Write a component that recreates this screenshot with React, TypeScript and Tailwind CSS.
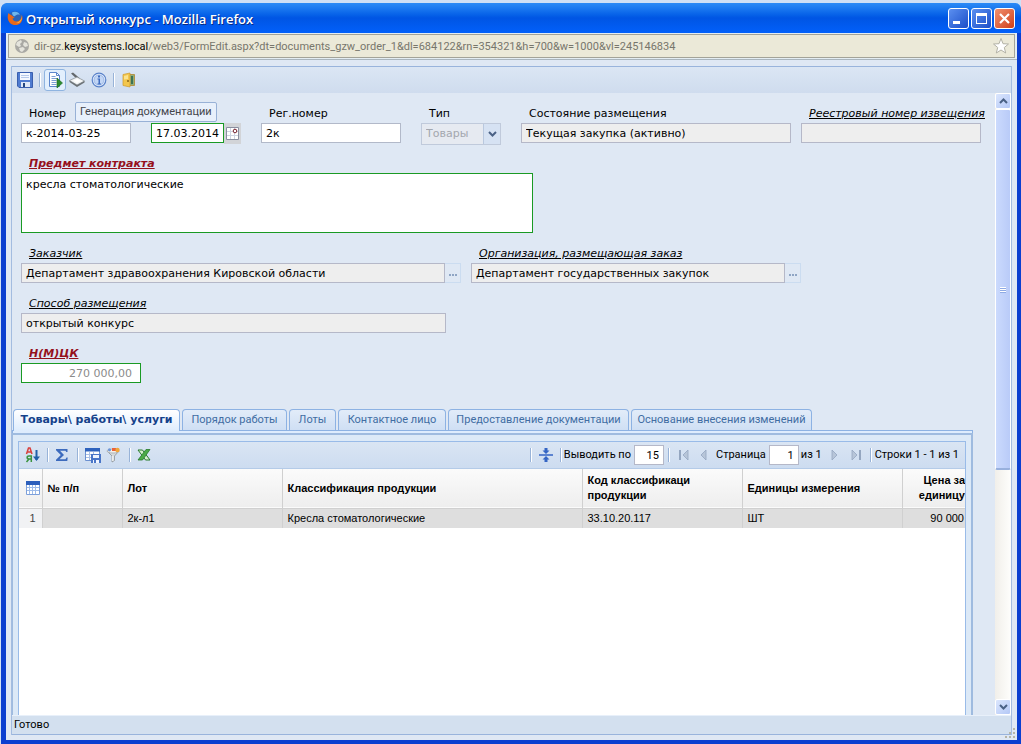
import { useState } from "react";
import type { ReactNode } from "react";

const tahoma = "font-['Roboto',sans-serif]";
const verdana = "font-['DejaVu_Sans',sans-serif]";
const arial = "font-['Liberation_Sans',sans-serif]";

const tabs = [
  { title: "Товары\\ работы\\ услуги", width: "w-[167px]" },
  { title: "Порядок работы", width: "w-[105px]" },
  { title: "Лоты", width: "w-[47px]" },
  { title: "Контактное лицо", width: "w-[108px]" },
  { title: "Предоставление документации", width: "w-[181px]" },
  { title: "Основание внесения изменений", width: "w-[181px]" },
];

const rows = [
  { id: 1, lot: "2к-л1", product: "Кресла стоматологические", code: "33.10.20.117", unit: "ШТ", price: "90 000" },
];

function Separator() {
  return <span className="h-3.5 w-0.5 border-l border-[#98b3d8] bg-white" />;
}

function FirefoxIcon() {
  return (
    <svg width="16" height="16" viewBox="0 0 16 16">
      <circle cx="8" cy="8" r="6.8" fill="#2a63b8" />
      <path d="M5 2.5C8 .8 12 2 13 5c-2-1-4 0-5 1S5 5 5 2.500z" fill="#6db6ee" />
      <path d="M1.500 3C.3 6 .3 10 3 13c3 3 8 2.800 11-.5 1.500-2 2-5 .8-8 0 3-1 5.500-3.300 6.500C9 12 6 11 5.500 8.500l2-.8-2-1.700C4 5 3 4.500 1.500 3z" fill="#e8681a" />
      <path d="M14.800 5c.5 4-2 7.500-6 8 4 1 7-3 6-8z" fill="#fbc043" />
    </svg>
  );
}

function GlobeIcon() {
  return (
    <svg width="16" height="16" viewBox="0 0 16 16">
      <circle cx="8" cy="8" r="7" fill="#a9a9a4" />
      <path d="M3 4l4-2 1 2-2 2 1 2-2 1-3-2zM10 4l3 1 1 3-3 1-2-2zM5 10l4-1 2 2-3 3-2-1z" fill="#e4e4dc" />
    </svg>
  );
}

function StarIcon() {
  return (
    <svg width="18" height="18" viewBox="0 0 18 18">
      <path d="M9 1.500l2 5.200 5.500.3-4.200 3.500 1.400 5.500L9 13l-4.700 3 1.400-5.500L1.500 7 7 6.700z" fill="#fff" stroke="#b3b2a6" />
    </svg>
  );
}

function SaveIcon() {
  return (
    <svg width="16" height="16" viewBox="0 0 16 16">
      <path d="M1 .5h14.500v15H2L.5 14V.5z" fill="#4f7bd0" stroke="#3a5fae" />
      <path d="M3 1h10v7H3z" fill="#f4f8ff" />
      <path d="M4 3.500h8M4 5.500h8" stroke="#b6c9ea" />
      <path d="M4 10h9v5H4z" fill="#dfe8f7" />
      <path d="M6 11h2v4H6z" fill="#24467f" />
    </svg>
  );
}

function GenerateIcon() {
  return (
    <svg width="16" height="16" viewBox="0 0 16 16">
      <path d="M2.500.5h7l3 3v11h-10z" fill="#fff" stroke="#5c86cc" />
      <path d="M9.500.5v3h3" fill="none" stroke="#5c86cc" />
      <path d="M4.500 4.500h4M4.500 6.500h6M4.500 8.500h5M4.500 10.500h5M4.500 12.500h5" stroke="#7c9fd6" />
      <path d="M10 6l5.500 5-5.500 5z" fill="#2c8a30" stroke="#176a1d" strokeWidth=".6" />
    </svg>
  );
}

function ScannerIcon() {
  return (
    <svg width="16" height="16" viewBox="0 0 16 16">
      <path d="M2 1.500l2-1 7 6-2 1.500z" fill="#62676b" />
      <path d="M.5 8.500L8 5l7.500 4-7.500 4z" fill="#f1f3f4" stroke="#82898e" strokeWidth=".7" />
      <path d="M.5 8.500V10L8 15v-2zM15.500 9v1.500L8 15v-2z" fill="#6c7276" />
      <path d="M4 8.800L8.500 7l3.500 2-4 2z" fill="#fff" />
    </svg>
  );
}

function InfoIcon() {
  return (
    <svg width="16" height="16" viewBox="0 0 16 16">
      <circle cx="8" cy="8" r="6.800" fill="#e3edfb" stroke="#5a82c9" strokeWidth="1.200" />
      <circle cx="8" cy="8" r="5" fill="#c2d6f5" stroke="#7c9fda" strokeWidth=".6" />
      <path d="M7 3.500h2v2H7zM6.500 6.500H9v5h1v1H6.500v-1h1v-4h-1z" fill="#3f6cc0" />
    </svg>
  );
}

function ExitIcon() {
  return (
    <svg width="16" height="16" viewBox="0 0 16 16">
      <path d="M7 2.500h6.500v11H7z" fill="#8fae78" stroke="#b49448" />
      <path d="M10 4h2v8h-2z" fill="#3d7356" />
      <path d="M2 2.500L9 1v14L2 13.500z" fill="#f3c64c" stroke="#cf9a2b" strokeWidth=".7" />
      <path d="M3 4l4-1v4L3 7.500z" fill="#fbe28c" />
      <circle cx="7" cy="9" r="1" fill="#8b6414" />
    </svg>
  );
}

function CalendarIcon() {
  return (
    <svg width="13" height="13" viewBox="0 0 13 13">
      <path d="M.5.500h12v12H.5z" fill="#fff" stroke="#8a8fa0" />
      <path d="M1 4.500h11M1 8.500h11M4.500 1v11M8.500 1v11" stroke="#cfd5e2" />
      <circle cx="9" cy="4" r="1.800" fill="#fff" stroke="#7a2430" />
    </svg>
  );
}

function SortIcon() {
  return (
    <svg width="16" height="16" viewBox="0 0 16 16">
      <path d="M1.500 7L3.500 1h1.500L7 7M2.500 5h3.500" fill="none" stroke="#d8403c" strokeWidth="1.500" />
      <path d="M6.300 15V9H4C1.500 9 1.500 12 4 12h2.300M4 12l-2.500 3" fill="none" stroke="#3c9440" strokeWidth="1.500" />
      <path d="M11.500 3v10" stroke="#1f5fa8" strokeWidth="2" />
      <path d="M8 9.500h7L11.500 14z" fill="#1f5fa8" />
    </svg>
  );
}

function SigmaIcon() {
  return (
    <svg width="14" height="14" viewBox="0 0 14 14">
      <path d="M1 1h11.500v3h-1.200L10.500 2.800H5L9 7l-4.500 4.300h6L11.500 9.500h1.200L12.300 13H1v-1.300L5.800 7 1 2.200z" fill="#3d6bbd" />
    </svg>
  );
}

function TableSaveIcon() {
  return (
    <svg width="16" height="16" viewBox="0 0 16 16">
      <path d="M.5 1.500h14v12H.5z" fill="#fff" stroke="#6b90d0" />
      <path d="M0 1h15v3.500H0z" fill="#2e62bd" />
      <path d="M1 7.500h13M1 10.500h13M4.500 5v8M8.500 5v8" stroke="#a9c0e6" />
      <path d="M6 7h10v9H6z" fill="#4a76c8" />
      <path d="M8 8h6v3H8zM8 13h6v3H8z" fill="#f0f5ff" />
      <path d="M9 13h2v3H9z" fill="#4a76c8" />
    </svg>
  );
}

function FilterIcon() {
  return (
    <svg width="16" height="16" viewBox="0 0 16 16">
      <path d="M2 4h12L9.500 9v4.500L7 15V9z" fill="#d5d9dc" stroke="#8b9297" strokeWidth=".8" />
      <path d="M7.800 9V14" stroke="#fff" />
      <ellipse cx="8" cy="4" rx="6" ry="2" fill="#f2f0ea" stroke="#9ba1a6" strokeWidth=".7" />
      <path d="M7 1h4v3H7z" fill="#e9633b" />
      <circle cx="12.500" cy="3" r="2.200" fill="#f0a63a" />
      <circle cx="4.500" cy="2.800" r="1.600" fill="#6d96d8" />
    </svg>
  );
}

function ExcelIcon() {
  return (
    <svg width="14" height="14" viewBox="0 0 14 14">
      <path d="M1 2h4.500L13 12H8.500z" fill="#d6efce" stroke="#267a2b" />
      <path d="M9 1.500h4L5.500 12H1z" fill="#4cab47" stroke="#267a2b" strokeWidth=".8" />
    </svg>
  );
}

function CollapseIcon() {
  return (
    <svg width="16" height="16" viewBox="0 0 16 16">
      <path d="M1 8h14" stroke="#3465c4" strokeWidth="1.500" />
      <path d="M6.500 1h3v2.500h2L8 7 4.500 3.500h2zM6.500 15h3v-2.500h2L8 9l-3.500 3.500h2z" fill="#3465c4" />
    </svg>
  );
}

function GridIcon() {
  return (
    <svg width="14" height="14" viewBox="0 0 14 14">
      <path d="M.5.500h13v13H.5z" fill="#fff" stroke="#7c9fda" />
      <path d="M0 0h14v4H0z" fill="#2c5fbb" />
      <path d="M1 6.500h12M1 9.500h12M3.500 4v9M6.500 4v9M9.500 4v9" stroke="#9dbbe9" />
    </svg>
  );
}

function PagerIcon({ path, bar }: { path: string; bar?: string }) {
  return (
    <svg width="12" height="12" viewBox="0 0 12 12">
      <path d={path} fill="#b7c5d8" stroke="#94a6c0" strokeWidth=".8" />
      {bar && <path d={bar} stroke="#94a6c0" strokeWidth="2" />}
    </svg>
  );
}

function MoreDots() {
  return (
    <svg width="8" height="2" viewBox="0 0 8 2">
      <path d="M0 0h2v2H0zM3 0h2v2H3zM6 0h2v2H6z" fill="#8fa5c4" />
    </svg>
  );
}

function Chevron({ up }: { up?: boolean }) {
  return (
    <svg width="9" height="6" viewBox="0 0 9 6">
      <path d={up ? "M1 5l3.500-3.500L8 5" : "M1 1l3.500 3.500L8 1"} fill="none" stroke="#4a6185" strokeWidth="2" />
    </svg>
  );
}

function Field({ id, label, className, labelClass, children }: {
  id: string;
  label: string;
  className?: string;
  labelClass?: string;
  children: ReactNode;
}) {
  return (
    <div className={`flex shrink-0 flex-col ${className ?? ""}`}>
      <label htmlFor={id} className={`h-5 pt-px pl-2 leading-5 whitespace-nowrap ${labelClass ?? ""}`}>
        {label}
      </label>
      <div className="flex">{children}</div>
    </div>
  );
}

const link = "italic underline";
const required = "italic underline font-bold text-[#95101c]";
const input = "h-5 w-full min-w-0 border border-[#b2b9c9] bg-white px-1 outline-none";
const readOnly = "h-5 w-full min-w-0 border border-[#b5b8c8] bg-[#eeeeee] px-1 pt-px outline-none";
const green = "w-full min-w-0 border border-[#1a9a24] bg-white px-1 outline-none";
const more = "flex h-5 w-4 shrink-0 items-center justify-center border border-l-0 border-[#cbdcf0] pt-1";

function TitleBar() {
  return (
    <header className="flex h-[30px] items-center rounded-t-md bg-linear-to-b from-[#2b8bf6] via-[#0055e4] to-[#0260fa] pr-1.5 pl-1.5">
      <FirefoxIcon />
      <h1 className="flex-1 pt-1 pl-[3px] font-['Open_Sans',sans-serif] text-[13px] font-semibold text-white [text-shadow:1px_1px_#0a2a80]">
        Открытый конкурс - Mozilla Firefox
      </h1>
      <div className="flex gap-0.5">
        <button aria-label="Свернуть" className="flex size-[21px] items-end rounded-[3px] border border-white bg-linear-to-br from-[#5b8ff0] to-[#1c4dc8] p-1">
          <span className="h-[3px] w-[7px] bg-white" />
        </button>
        <button aria-label="Развернуть" className="flex size-[21px] items-center justify-center rounded-[3px] border border-white bg-linear-to-br from-[#5b8ff0] to-[#1c4dc8]">
          <span className="h-[11px] w-[11px] border border-t-[3px] border-white" />
        </button>
        <button aria-label="Закрыть" className="flex size-[21px] items-center justify-center rounded-[3px] border border-white bg-linear-to-br from-[#f0906e] to-[#cf3c12]">
          <svg width="13" height="13" viewBox="0 0 13 13">
            <path d="M2 2l9 9M11 2l-9 9" stroke="#fff" strokeWidth="2.200" />
          </svg>
        </button>
      </div>
    </header>
  );
}

function AddressBar() {
  return (
    <div className="border-b border-[#a9b5bd] bg-[#e3edf3] px-0.5 pt-px pb-px">
      <div className={`flex h-6 items-center border border-[#a3a398] bg-[#ebe9d8] pr-1 pl-[5px] text-[11px] ${tahoma}`}>
        <GlobeIcon />
        <p className="flex-1 pt-0.5 pl-1 whitespace-nowrap text-[#77766c]">
          dir-gz.<span className="text-black">keysystems.local</span>
          /web3/FormEdit.aspx?dt=documents_gzw_order_1&amp;dl=684122&amp;rn=354321&amp;h=700&amp;w=1000&amp;vl=245146834
        </p>
        <button aria-label="Закладка"><StarIcon /></button>
      </div>
    </div>
  );
}

function Toolbar() {
  return (
    <div className="relative flex h-[27px] shrink-0 items-center border-t border-[#99b4dc] bg-linear-to-b from-[#dbe6f4] to-[#cfdcee] pl-[5px]">
      <button aria-label="Сохранить"><SaveIcon /></button>
      <span className="ml-1.5 flex"><Separator /></span>
      <button aria-label="Генерация документации" className="ml-[3px] flex size-[22px] items-center justify-center rounded-[3px] border border-[#8fb4e0] bg-[#e2effd]">
        <GenerateIcon />
      </button>
      <button aria-label="Сканировать" className="ml-[3px]"><ScannerIcon /></button>
      <button aria-label="Информация" className="ml-1.5"><InfoIcon /></button>
      <span className="ml-1.5 flex"><Separator /></span>
      <button aria-label="Выход" className="ml-1.5"><ExitIcon /></button>
      <div role="tooltip" className={`absolute top-[35px] left-[63px] z-10 rounded-xs border border-[#98b1d6] bg-[#e8f0fb] px-1 text-[11px] leading-[18px] whitespace-nowrap text-[#44464c] ${tahoma}`}>
        Генерация документации
      </div>
    </div>
  );
}

function OrderForm() {
  return (
    <form className={`flex flex-col gap-2.5 pt-2.5 pl-[9px] text-[11px] text-black ${verdana}`}>
      <div className="flex h-10">
        <Field id="number" label="Номер" className="mr-5 w-[110px]">
          <input id="number" className={input} defaultValue="к-2014-03-25" />
        </Field>
        <div className="mr-5 flex w-[90px] shrink-0 pt-5">
          <input aria-label="Дата" className={`h-5 ${green}`} defaultValue="17.03.2014" />
          <button type="button" aria-label="Календарь" className="flex h-[21px] w-[17px] shrink-0 items-center justify-center bg-[#d2d4d8]">
            <CalendarIcon />
          </button>
        </div>
        <Field id="regNumber" label="Рег.номер" className="mr-5 w-[140px]">
          <input id="regNumber" className={input} defaultValue="2к" />
        </Field>
        <Field id="type" label="Тип" className="mr-5 w-20">
          <div className="relative w-full">
            <select id="type" disabled className="block h-[22px] w-full appearance-none border border-[#c0cadb] bg-[#e6eaf1] px-1 text-[#a3a7ae] opacity-100">
              <option>Товары</option>
            </select>
            <span className="pointer-events-none absolute top-px right-px flex h-5 w-[17px] items-center justify-center border-l border-[#b9c8de] bg-[#d6e2f3]">
              <Chevron />
            </span>
          </div>
        </Field>
        <Field id="state" label="Состояние размещения" className="mr-2.5 w-[270px]">
          <input id="state" readOnly className={readOnly} defaultValue="Текущая закупка (активно)" />
        </Field>
        <Field id="registry" label="Реестровый номер извещения" labelClass={link} className="w-[180px]">
          <input id="registry" readOnly className={readOnly} />
        </Field>
      </div>

      <Field id="subject" label="Предмет контракта" labelClass={required} className="w-[512px]">
        <textarea id="subject" className={`h-[60px] resize-none py-1 leading-[14px] ${green}`} defaultValue="кресла стоматологические" />
      </Field>

      <div className="flex gap-2.5">
        <Field id="customer" label="Заказчик" labelClass={link} className="w-[440px]">
          <input id="customer" readOnly className={readOnly} defaultValue="Департамент здравоохранения Кировской области" />
          <button type="button" aria-label="Выбрать заказчика" className={more}><MoreDots /></button>
        </Field>
        <Field id="organization" label="Организация, размещающая заказ" labelClass={link} className="w-[330px]">
          <input id="organization" readOnly className={readOnly} defaultValue="Департамент государственных закупок" />
          <button type="button" aria-label="Выбрать организацию" className={more}><MoreDots /></button>
        </Field>
      </div>

      <Field id="method" label="Способ размещения" labelClass={link} className="w-[425px]">
        <input id="method" readOnly className={readOnly} defaultValue="открытый конкурс" />
      </Field>

      <Field id="price" label="Н(М)ЦК" labelClass={required} className="w-[120px]">
        <input id="price" className={`h-5 pr-2 text-right text-[#8b8b8b] ${green}`} defaultValue="270 000,00" />
      </Field>
    </form>
  );
}

function GridToolbar() {
  return (
    <div className={`flex h-[27px] shrink-0 items-center border-b border-[#b4cbe8] bg-linear-to-b from-[#dae5f3] to-[#cddcf0] pl-1.5 text-[11px] text-black ${tahoma}`}>
      <button aria-label="Сортировка"><SortIcon /></button>
      <span className="ml-1.5 flex"><Separator /></span>
      <button aria-label="Итоги" className="ml-1.5"><SigmaIcon /></button>
      <span className="ml-2 flex"><Separator /></span>
      <button aria-label="Сохранить вид" className="ml-1.5"><TableSaveIcon /></button>
      <button aria-label="Фильтр" className="ml-1"><FilterIcon /></button>
      <span className="ml-2 flex"><Separator /></span>
      <button aria-label="Экспорт в Excel" className="ml-1.5"><ExcelIcon /></button>

      <div className="ml-auto flex items-center whitespace-nowrap">
        <Separator />
        <button aria-label="Свернуть группы" className="mx-1.5"><CollapseIcon /></button>
        <Separator />
        <label htmlFor="pageSize" className="pl-0.5">Выводить по</label>
        <input id="pageSize" className="ml-[3px] h-5 w-[30px] border border-[#b5b8c8] bg-white px-1 text-right outline-none" defaultValue="15" />
        <span className="ml-1 flex"><Separator /></span>
        <button aria-label="Первая" className="ml-2"><PagerIcon path="M10 1v10L5 6z" bar="M2 1v10" /></button>
        <button aria-label="Предыдущая" className="mr-1.5 ml-2"><PagerIcon path="M8 1v10L3 6z" /></button>
        <label htmlFor="page">Страница</label>
        <input id="page" className="mr-0.5 ml-[3px] h-5 w-[30px] border border-[#b5b8c8] bg-white px-1 text-right outline-none" defaultValue="1" />
        <span>из 1</span>
        <button aria-label="Следующая" className="ml-1.5"><PagerIcon path="M4 1v10l5-5z" /></button>
        <button aria-label="Последняя" className="mr-2 ml-2.5"><PagerIcon path="M2 1v10l5-5z" bar="M10 1v10" /></button>
        <Separator />
        <span className="pr-1.5 pl-[3px]">Строки 1 - 1 из 1</span>
      </div>
    </div>
  );
}

function LotsGrid() {
  const cell = "border-r border-[#d0d0d0] px-[5px]";
  return (
    <table className={`w-full table-fixed border-collapse text-left text-[11px] text-black ${arial}`}>
      <thead>
        <tr className="h-[39px] border-b border-[#d0d0d0] bg-linear-to-b from-[#fbfbfb] to-[#eeeeee] leading-[15px]">
          <th className="w-[23px] border-r border-[#d0d0d0] pl-[7px]"><GridIcon /></th>
          <th className={`w-20 ${cell}`}>№ п/п</th>
          <th className={`w-40 ${cell}`}>Лот</th>
          <th className={`w-[300px] ${cell}`}>Классификация продукции</th>
          <th className={`w-40 ${cell}`}>Код классификаци продукции</th>
          <th className={`w-40 ${cell}`}>Единицы измерения</th>
          <th className="text-right">Цена за единицу</th>
        </tr>
      </thead>
      <tbody>
        {rows.map((row) => (
          <tr key={row.id} className="h-5 bg-[#dedede]">
            <td className="border-r border-[#d0d0d0] bg-[#f1f2f4] pr-1.5 text-right text-[#444444]">{row.id}</td>
            <td className={cell} />
            <td className={cell}>{row.lot}</td>
            <td className={cell}>{row.product}</td>
            <td className={cell}>{row.code}</td>
            <td className={cell}>{row.unit}</td>
            <td className="pr-px text-right whitespace-nowrap">{row.price}</td>
          </tr>
        ))}
      </tbody>
    </table>
  );
}

function TabPanel() {
  const [active, setActive] = useState(0);
  return (
    <section className="mt-[26px] mr-[22px] flex min-h-0 flex-1 flex-col">
      <div role="tablist" className="flex h-[21px] shrink-0 gap-0.5 pl-px text-[11px]">
        {tabs.map((tab, i) => (
          <button
            key={tab.title}
            role="tab"
            aria-selected={i === active}
            onClick={() => setActive(i)}
            className={`rounded-t-sm border border-b-0 border-[#8db2e3] bg-linear-to-b whitespace-nowrap ${tab.width} ${
              i === active
                ? `relative z-10 -mb-px from-white to-[#deecfd] font-bold text-[#15428b] ${verdana}`
                : `from-[#e2ecf9] to-[#cfdff4] text-[#416da3] ${tahoma}`
            }`}
          >
            {tab.title}
          </button>
        ))}
      </div>
      <div className="h-[3px] shrink-0 border-t border-r border-l border-[#8db2e3] bg-[#deecfd]" />
      <div className="flex min-h-0 flex-1 flex-col border-t-2 border-r-2 border-l border-[#9fbbdf] bg-[#dce9f7] px-[5px] pt-1.5">
        <div className="flex min-h-0 flex-1 flex-col overflow-hidden border border-b-0 border-[#99bbe8] bg-white">
          <GridToolbar />
          <LotsGrid />
        </div>
      </div>
    </section>
  );
}

function ScrollBar() {
  const button = "flex h-4 w-full shrink-0 items-center justify-center rounded-xs border border-white bg-linear-to-br from-[#dbe6fd] to-[#b4c8f6]";
  return (
    <div className="flex w-4 shrink-0 flex-col bg-linear-to-r from-[#f1efea] to-[#fefefc]">
      <button aria-label="Вверх" className={button}><Chevron up /></button>
      <div className="flex h-[361px] flex-col items-center justify-center gap-px rounded-xs border border-b-2 border-white border-b-[#98b0dd] bg-linear-to-r from-[#cbdafd] to-[#b9cbf8]">
        <span className="h-px w-1.5 bg-white shadow-[0_1px_#8faae4]" />
        <span className="h-px w-1.5 bg-white shadow-[0_1px_#8faae4]" />
        <span className="h-px w-1.5 bg-white shadow-[0_1px_#8faae4]" />
      </div>
      <div className="flex-1" />
      <button aria-label="Вниз" className={button}><Chevron /></button>
    </div>
  );
}

export default function App() {
  return (
    <div className="flex h-screen min-h-[560px] flex-col overflow-hidden bg-[#cfe0f5] pt-[3px] pl-px">
      <div className="flex min-h-0 flex-1 flex-col rounded-t-lg bg-[#0b3fd0]">
        <TitleBar />
        <main className="relative mr-1 mb-1 ml-[5px] flex min-h-0 flex-1 flex-col bg-[#dfe8f4]">
          <AddressBar />
          <div className="mx-[5px] mt-1.5 mb-[5px] flex min-h-0 flex-1 flex-col border-r border-l border-[#a3bce0]">
            <Toolbar />
            <div className="flex min-h-0 flex-1">
              <div className="flex min-w-0 flex-1 flex-col">
                <OrderForm />
                <TabPanel />
              </div>
              <ScrollBar />
            </div>
            <footer className={`h-5 shrink-0 border-t border-b border-t-[#e8f0fa] border-b-[#99b4dc] bg-[#d3e0ef] pl-0.5 text-[11px] leading-[18px] text-black ${tahoma}`}>
              Готово
            </footer>
          </div>
          <svg width="11" height="11" viewBox="0 0 11 11" className="absolute right-0.5 bottom-0.5">
            <path d="M9 1h2v2H9zM9 5h2v2H9zM5 5h2v2H5zM9 9h2v2H9zM5 9h2v2H5zM1 9h2v2H1z" fill="#b5b5a8" />
          </svg>
        </main>
      </div>
    </div>
  );
}
